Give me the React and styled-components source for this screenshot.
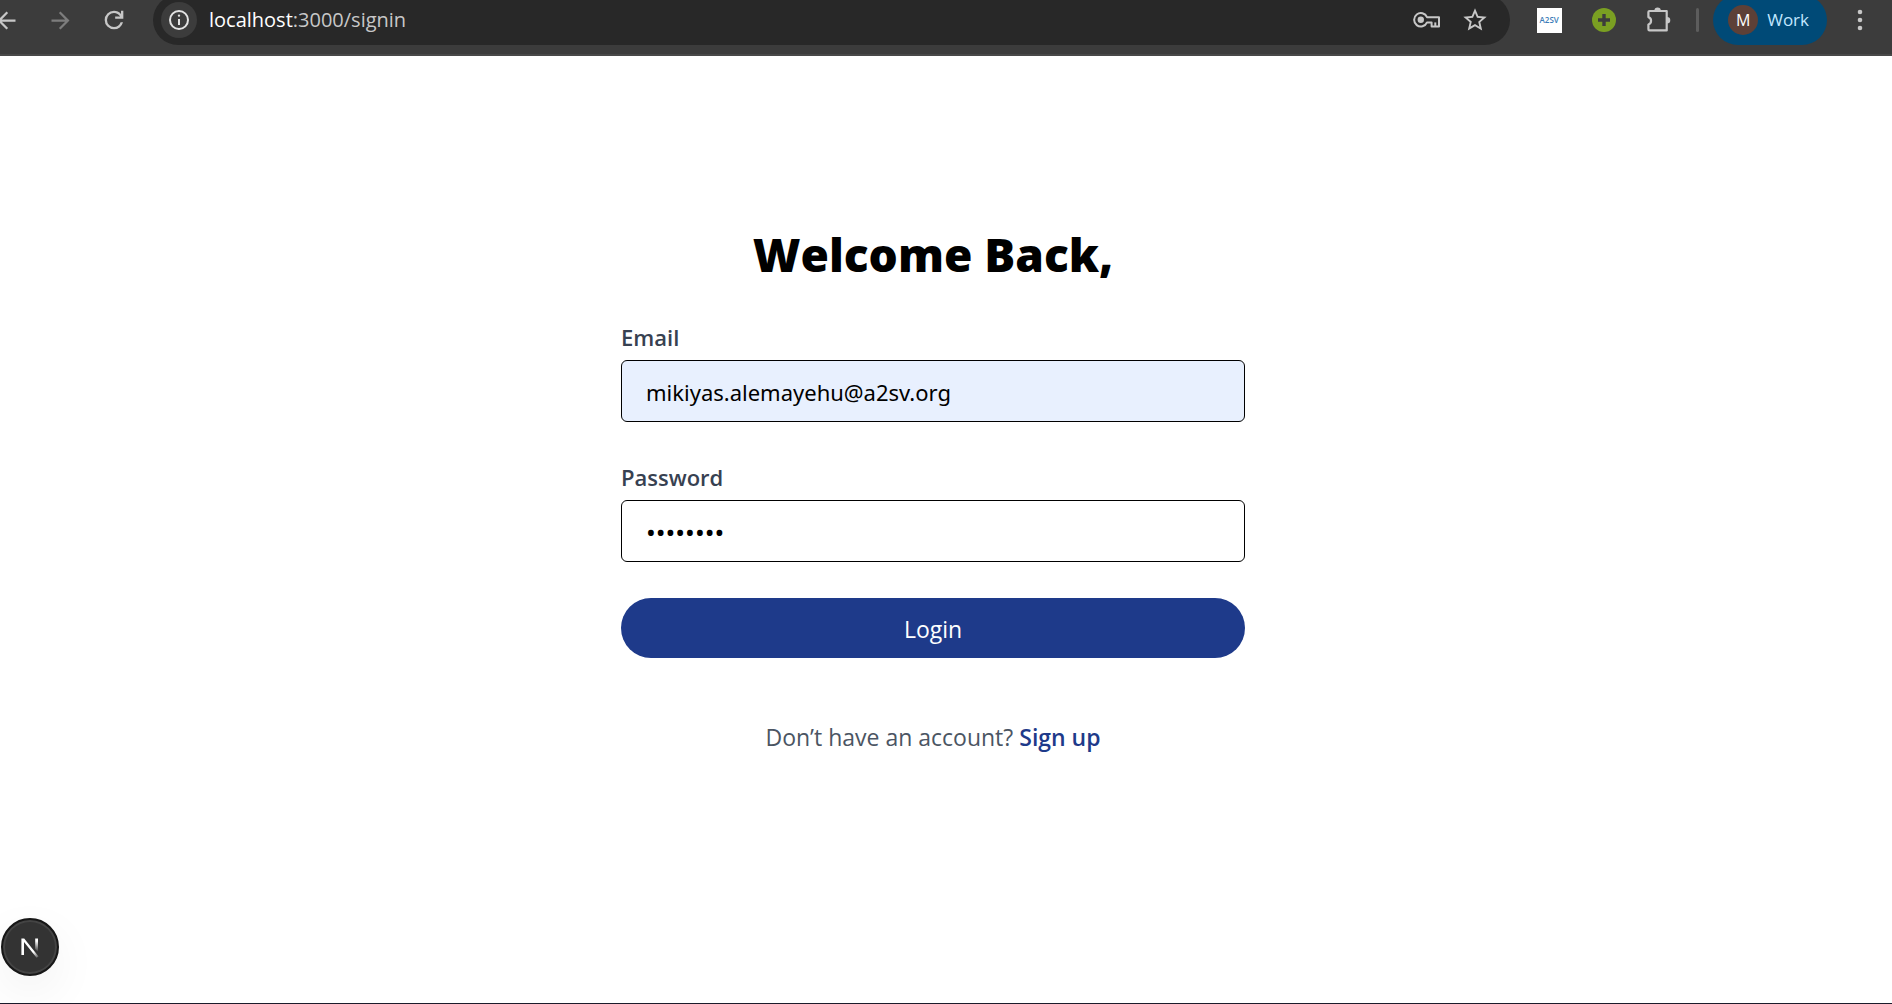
import React from "react";
import styled, { createGlobalStyle } from "styled-components";

const GlobalStyle = createGlobalStyle`
  *, *::before, *::after { box-sizing: border-box; }
  body {
    margin: 0;
    background: #fff;
    font-family: "Open Sans", "Noto Sans", sans-serif;
  }
  button, input { font: inherit; }
`;

const Page = styled.div`
  min-height: 100vh;
  display: flex;
  flex-direction: column;
  overflow: hidden;
  border-bottom: 1px solid #1b1b2b;
`;

const Toolbar = styled.header`
  height: 56px;
  padding-bottom: 14px;
  display: flex;
  align-items: center;
  overflow: hidden;
  background: #3c3c3c;
  border-bottom: 2px solid #484848;
`;

const IconButton = styled.button`
  flex: none;
  display: grid;
  place-items: center;
  width: ${(p) => p.$width || 40}px;
  height: 40px;
  padding: 0;
  border: 0;
  background: none;
  color: ${(p) => p.$color || "#c7c7c7"};
`;

const Nav = styled.nav`
  display: flex;
  gap: 14px;
  margin-left: -14px;
  margin-right: 19px;
`;

const AddressBar = styled.div`
  flex: 1;
  min-width: 0;
  height: 50px;
  padding: 0 11px 0 8px;
  display: flex;
  align-items: center;
  border-radius: 25px;
  background: #282828;
`;

const SiteInfo = styled.button`
  flex: none;
  display: grid;
  place-items: center;
  width: 36px;
  height: 36px;
  margin-right: 12px;
  padding: 0;
  border: 0;
  border-radius: 50%;
  background: #3c3c3c;
  color: #e3e3e3;
`;

const Url = styled.div`
  flex: 1;
  min-width: 0;
  font-size: 20px;
  line-height: 28px;
  color: #c7c7c7;
`;

const Host = styled.span`
  color: #fff;
`;

const Extensions = styled.div`
  display: flex;
  align-items: center;
  gap: 15px;
  margin-left: 19px;
`;

const Divider = styled.span`
  width: 3px;
  height: 24px;
  margin: 0 14px 0 17px;
  border-radius: 2px;
  background: #5d5d5d;
`;

const Profile = styled.button`
  flex: none;
  display: flex;
  align-items: center;
  gap: 9px;
  height: 50px;
  padding: 0 18px 0 15px;
  border: 0;
  border-radius: 25px;
  background: #004a77;
  color: #c2e7ff;
  font-size: 17px;
  line-height: 24px;
`;

const Avatar = styled.span`
  display: grid;
  place-items: center;
  width: 30px;
  height: 30px;
  border-radius: 50%;
  background: #5d4037;
  color: #fff;
  font-size: 16px;
`;

const ExtensionTile = styled.span`
  display: grid;
  place-items: center;
  width: 25px;
  height: 25px;
  background: #fff;
  color: #3b7cb8;
  font-size: 8px;
  font-weight: 600;
  line-height: 10px;
`;

const Main = styled.main`
  flex: 1;
  padding: 170px 26px 40px 0;
`;

const Form = styled.form`
  width: 100%;
  max-width: 624px;
  margin: 0 auto;
  display: flex;
  flex-direction: column;
`;

const Title = styled.h1`
  margin: 0 0 39px;
  font-size: 46px;
  line-height: 56px;
  font-weight: 800;
  text-align: center;
  color: #000;
`;

const Field = styled.div`
  display: flex;
  flex-direction: column;
  gap: 7px;
  margin-bottom: ${(p) => (p.$last ? 36 : 39)}px;
`;

const Label = styled.label`
  font-size: 22px;
  line-height: 32px;
  font-weight: 600;
  color: #374151;
`;

const Input = styled.input`
  width: 100%;
  height: 62px;
  padding: 2px 24px 0;
  border: 1px solid #000;
  border-radius: 6px;
  outline: 0;
  background: ${(p) => (p.$filled ? "#e8f0fe" : "#fff")};
  color: #000;
  font-family: "Noto Sans", sans-serif;
  font-size: ${(p) => (p.type === "password" ? 26 : 22)}px;
`;

const Submit = styled.button`
  height: 60px;
  padding: 2px 24px 0;
  border: 0;
  border-radius: 30px;
  background: #1e3a8a;
  color: #fff;
  font-size: 23px;
`;

const Prompt = styled.p`
  margin: 63px 0 0;
  font-size: 23px;
  line-height: 32px;
  text-align: center;
  color: #4b5563;
`;

const SignUp = styled.a`
  color: #1e3a8a;
  font-weight: 600;
  text-decoration: none;
`;

const DevBadge = styled.button`
  position: fixed;
  left: 1px;
  bottom: 28px;
  display: grid;
  place-items: center;
  width: 58px;
  height: 58px;
  padding: 0;
  border: 2px solid #171717;
  border-radius: 50%;
  background: #333;
  box-shadow: inset 0 0 0 2px #444, 0 16px 48px rgba(0, 0, 0, 0.06);
`;

const Svg = ({ size = 28, box = 24, children, ...rest }) => (
  <svg width={size} height={size} viewBox={`0 0 ${box} ${box}`} aria-hidden="true" {...rest}>
    {children}
  </svg>
);

const ArrowBack = () => (
  <Svg size={27}>
    <path fill="currentColor" d="M20 11H7.83l5.59-5.59L12 4l-8 8 8 8 1.41-1.41L7.83 13H20v-2z" />
  </Svg>
);

const ArrowForward = () => (
  <Svg size={27}>
    <path fill="currentColor" d="M12 4l-1.41 1.41L16.17 11H4v2h12.17l-5.58 5.59L12 20l8-8z" />
  </Svg>
);

const Reload = () => (
  <Svg size={28}>
    <path
      fill="currentColor"
      d="M12 20q-3.35 0-5.675-2.325T4 12t2.325-5.675T12 4q1.725 0 3.3.713T18 6.75V4h2v7h-7V9h4.2q-.8-1.4-2.187-2.2T12 6Q9.5 6 7.75 7.75T6 12t1.75 4.25T12 18q1.925 0 3.475-1.1T17.65 14h2.1q-.7 2.65-2.85 4.325T12 20"
    />
  </Svg>
);

const Info = () => (
  <Svg size={24}>
    <path
      fill="currentColor"
      d="M11 17h2v-6h-2v6zm1-8.2a1.2 1.2 0 1 0 0-2.4 1.2 1.2 0 0 0 0 2.4zM12 22a10 10 0 1 1 0-20 10 10 0 0 1 0 20zm0-2a8 8 0 1 0 0-16 8 8 0 0 0 0 16z"
    />
  </Svg>
);

const Key = () => (
  <svg width="28" height="18" viewBox="0 0 28 18" aria-hidden="true">
    <path
      fill="none"
      stroke="currentColor"
      strokeWidth="2"
      strokeLinejoin="round"
      d="M14 6.2A6.7 6.7 0 1 0 14 11.4H18.6V15.4H26V6.2Z"
    />
    <path fill="none" stroke="currentColor" strokeWidth="2" d="M22.3 15.4v-4" />
    <circle cx="7.8" cy="8.8" r="3.2" fill="currentColor" />
  </svg>
);

const Star = () => (
  <Svg size={28}>
    <path
      fill="currentColor"
      d="M22 9.24l-7.19-.62L12 2 9.19 8.63 2 9.24l5.46 4.73L5.82 21 12 17.27 18.18 21l-1.63-7.03L22 9.24zM12 15.4l-3.76 2.27 1-4.28-3.32-2.88 4.38-.38L12 6.1l1.71 4.04 4.38.38-3.32 2.88 1 4.28L12 15.4z"
    />
  </Svg>
);

const GreenPlus = () => (
  <Svg size={24}>
    <circle cx="12" cy="12" r="12" fill="#7a9f22" />
    <path d="M12 6v12M6 12h12" stroke="#3c3c3c" strokeWidth="3.4" />
  </Svg>
);

const Puzzle = () => (
  <Svg size={28} box={28}>
    <path
      fill="none"
      stroke="currentColor"
      strokeWidth="2.2"
      strokeLinejoin="round"
      d="M4.5 5h17.2v19.4H4.5q-1.1 0-1.1-1.1v-4.8a3.9 3.9 0 0 0 0-7.4V6.1Q3.4 5 4.5 5z"
    />
    <path fill="currentColor" d="M9.4 4.6a3.2 3.2 0 0 1 6.4 0zM22 11a3.2 3.2 0 0 1 0 6.6z" />
  </Svg>
);

const Dots = () => (
  <Svg size={24}>
    <g fill="currentColor">
      <circle cx="12" cy="4" r="2.3" />
      <circle cx="12" cy="12" r="2.3" />
      <circle cx="12" cy="20" r="2.3" />
    </g>
  </Svg>
);

const NextMark = () => (
  <svg width="20" height="22" viewBox="0 0 20 22" aria-hidden="true">
    <defs>
      <linearGradient id="stem" x1="0" y1="0" x2="0" y2="1">
        <stop offset="0.2" stopColor="#fff" />
        <stop offset="1" stopColor="#fff" stopOpacity="0" />
      </linearGradient>
      <linearGradient id="slash" x1="0" y1="0" x2="1" y2="1">
        <stop offset="0.7" stopColor="#fff" />
        <stop offset="1" stopColor="#fff" stopOpacity="0.1" />
      </linearGradient>
    </defs>
    <path d="M1.4 19V2.4h2.8L18.6 20.4l-2 1.4L4 6v13z" fill="url(#slash)" />
    <path d="M15.2 2.4h2.8V16l-2.8-3z" fill="url(#stem)" />
  </svg>
);

export default function App() {
  return (
    <Page>
      <GlobalStyle />
      <Toolbar>
        <Nav aria-label="History">
          <IconButton type="button" aria-label="Back"><ArrowBack /></IconButton>
          <IconButton type="button" aria-label="Forward" $color="#7d7d7d"><ArrowForward /></IconButton>
          <IconButton type="button" aria-label="Reload"><Reload /></IconButton>
        </Nav>
        <AddressBar>
          <SiteInfo type="button" aria-label="Site information"><Info /></SiteInfo>
          <Url><Host>localhost</Host>:3000/signin</Url>
          <IconButton type="button" aria-label="Passwords" $width={48}><Key /></IconButton>
          <IconButton type="button" aria-label="Bookmark" $width={48}><Star /></IconButton>
        </AddressBar>
        <Extensions>
          <IconButton type="button" aria-label="A2SV"><ExtensionTile>A2SV</ExtensionTile></IconButton>
          <IconButton type="button" aria-label="Add"><GreenPlus /></IconButton>
          <IconButton type="button" aria-label="Extensions"><Puzzle /></IconButton>
        </Extensions>
        <Divider />
        <Profile type="button"><Avatar>M</Avatar>Work</Profile>
        <IconButton type="button" aria-label="Menu" $width={65}><Dots /></IconButton>
      </Toolbar>
      <Main>
        <Form onSubmit={(e) => e.preventDefault()}>
          <Title>Welcome Back,</Title>
          <Field>
            <Label htmlFor="email">Email</Label>
            <Input id="email" type="email" defaultValue="mikiyas.alemayehu@a2sv.org" $filled />
          </Field>
          <Field $last>
            <Label htmlFor="password">Password</Label>
            <Input id="password" type="password" defaultValue="password" />
          </Field>
          <Submit type="submit">Login</Submit>
          <Prompt>
            Don’t have an account? <SignUp href="#signup">Sign up</SignUp>
          </Prompt>
        </Form>
      </Main>
      <DevBadge type="button" aria-label="Next.js dev tools"><NextMark /></DevBadge>
    </Page>
  );
}
